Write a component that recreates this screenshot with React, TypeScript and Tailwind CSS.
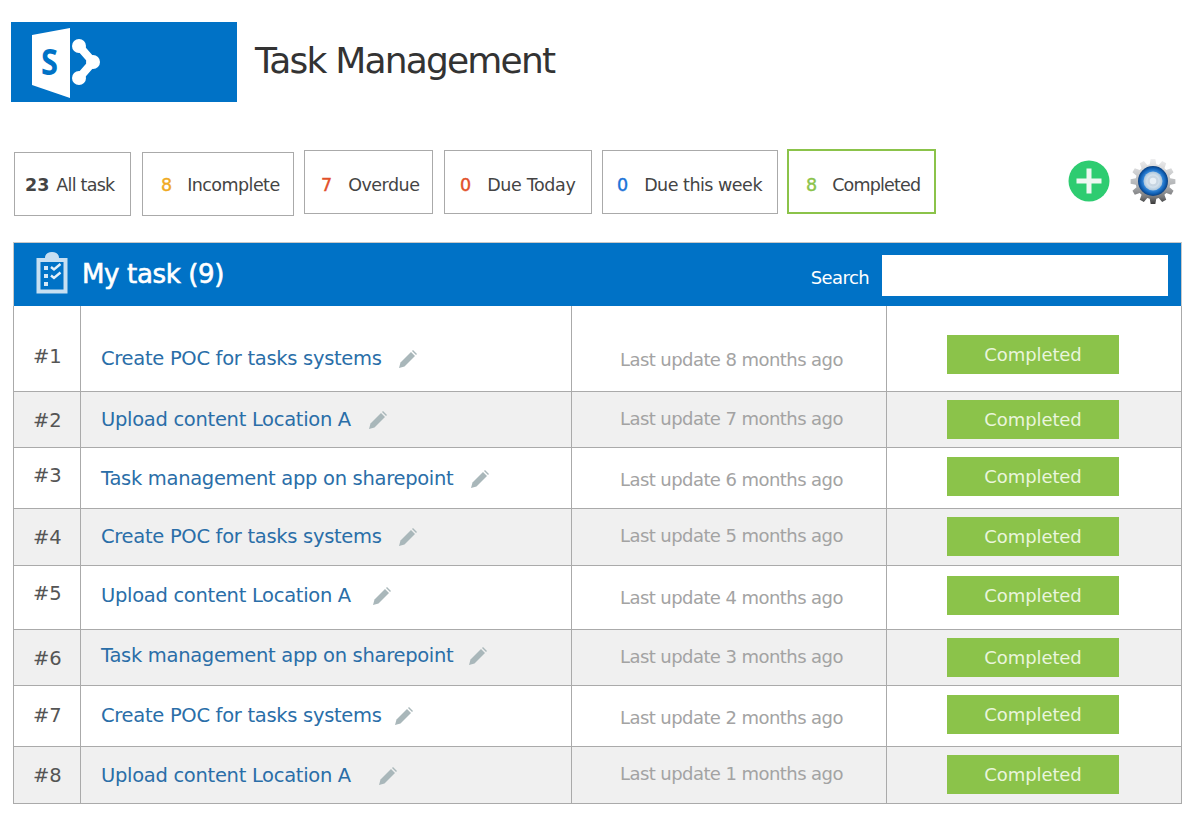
const font = "font-['DejaVu_Sans',sans-serif]";

function Logo() {
  return (
    <svg width="226" height="80" viewBox="0 0 226 80" className="block">
      <rect width="226" height="80" fill="#0072c6" />
      <path d="M21 13 L59 6 V76 L21 63 Z" fill="#fff" />
      <text transform="translate(30 53) scale(0.88 1)" fontFamily="'Noto Sans',sans-serif" fontWeight="700" fontSize="35" fill="#0072c6">S</text>
      <g fill="#fff">
        <circle cx="68" cy="24" r="7" />
        <circle cx="68" cy="56" r="7" />
        <circle cx="82" cy="40" r="7" />
      </g>
      <path d="M68 24 L82 40 L68 56" stroke="#fff" strokeWidth="8" fill="none" />
    </svg>
  );
}

function PlusIcon() {
  return (
    <svg width="42" height="42" viewBox="0 0 42 42" className="block">
      <circle cx="21" cy="21" r="20.5" fill="#2ecc71" />
      <path d="M21 8.5 V33.5 M8.5 21 H33.5" stroke="#eef7f2" strokeWidth="5" />
    </svg>
  );
}

function gearPath(cx: number, cy: number, outer: number, inner: number, n: number) {
  const pts: string[] = [];
  const step = (Math.PI * 2) / n;
  for (let i = 0; i < n; i++) {
    const a = i * step - Math.PI / 2;
    const o = [a - step * 0.36, a - step * 0.2, a + step * 0.2, a + step * 0.36];
    const r = [inner, outer, outer, inner];
    o.forEach((t, k) => pts.push(`${(cx + r[k] * Math.cos(t)).toFixed(2)} ${(cy + r[k] * Math.sin(t)).toFixed(2)}`));
  }
  return `M${pts.join(" L")} Z`;
}

function GearIcon() {
  return (
    <svg width="46" height="48" viewBox="0 0 46 48" className="block">
      <defs>
        <linearGradient id="g1" x1="0" y1="0" x2="0" y2="1">
          <stop offset="0" stopColor="#eeeeef" />
          <stop offset="0.55" stopColor="#b4b6b8" />
          <stop offset="0.85" stopColor="#77787a" />
          <stop offset="1" stopColor="#3a3a3a" />
        </linearGradient>
        <radialGradient id="g2" cx="0.5" cy="0.5" r="0.5">
          <stop offset="0.6" stopColor="#3a8ee0" />
          <stop offset="0.85" stopColor="#1060b4" />
          <stop offset="1" stopColor="#0a3f80" />
        </radialGradient>
        <radialGradient id="g3" cx="0.5" cy="0.5" r="0.5">
          <stop offset="0.45" stopColor="#e8f0f6" />
          <stop offset="1" stopColor="#a9c4da" />
        </radialGradient>
      </defs>
      <path d={gearPath(23, 23.5, 22.5, 17.5, 12)} fill="url(#g1)" />
      <circle cx="23" cy="23" r="15" fill="url(#g2)" />
      <circle cx="23" cy="23" r="9.5" fill="url(#g3)" />
      <circle cx="23" cy="23" r="4.5" fill="none" stroke="#c8d6e2" strokeWidth="2.5" />
    </svg>
  );
}

function ClipboardIcon() {
  return (
    <svg width="32" height="42" viewBox="0 0 32 42" className="block">
      <path d="M0.5 6 H9 C9 2 12 0 16 0 C20 0 23 2 23 6 H31.5 V41.5 H0.5 Z" fill="#c6dff2" />
      <rect x="4.5" y="10" width="23" height="27.5" fill="#0072c6" />
      <g fill="#d5e8f6">
        <rect x="8" y="14" width="4" height="4" />
        <rect x="8" y="22" width="4" height="4" />
        <rect x="8" y="30" width="4" height="4" />
      </g>
      <path d="M15 15 L18 17.5 L24.5 12 M15 23.5 L18 26 L24.5 20.5" stroke="#e4f0f9" strokeWidth="2.4" fill="none" />
    </svg>
  );
}

function Pencil() {
  return (
    <svg width="18" height="18" viewBox="0 0 18 18" className="block">
      <path d="M0 18 L1.5 12.5 L12 2 L16 6 L5.5 16.5 Z" fill="#a9b7ba" />
      <path d="M13 1 L14 0 L18 4 L17 5 Z" fill="#a9b7ba" />
    </svg>
  );
}

const tabs = [
  { n: "23", label: "All task", lab: "tracking-[-0.75px]", box: "w-[117px] h-[64px] ml-[14px] mt-[152px] pl-[10px] pt-[2px] gap-[7px] border border-[#aaa]", num: "text-[#444] font-bold" },
  { n: "8", label: "Incomplete", lab: "tracking-[-0.55px]", box: "w-[152px] h-[64px] ml-[11px] mt-[152px] pl-[18px] pt-[2px] gap-[15px] border border-[#aaa]", num: "text-[#efaa22] [-webkit-text-stroke:0.4px_#efaa22]" },
  { n: "7", label: "Overdue", lab: "tracking-[-0.5px]", box: "w-[129px] h-[64px] ml-[10px] mt-[150px] pl-[16px] pt-[6px] gap-[16px] border border-[#aaa]", num: "text-[#e2502a] [-webkit-text-stroke:0.4px_#e2502a]" },
  { n: "0", label: "Due Today", lab: "tracking-[-0.35px]", box: "w-[148px] h-[64px] ml-[11px] mt-[150px] pl-[15px] pt-[6px] gap-[16px] border border-[#aaa]", num: "text-[#e2502a] [-webkit-text-stroke:0.4px_#e2502a]" },
  { n: "0", label: "Due this week", lab: "tracking-[-0.5px]", box: "w-[176px] h-[64px] ml-[10px] mt-[150px] pl-[14px] pt-[6px] gap-[16px] border border-[#aaa]", num: "text-[#1c73d8] [-webkit-text-stroke:0.4px_#1c73d8]" },
  { n: "8", label: "Completed", lab: "tracking-[-0.8px]", box: "w-[149px] h-[65px] ml-[9px] mt-[149px] pl-[17px] pt-[7px] gap-[15px] border-2 border-[#8bc34a]", num: "text-[#8bc34a] [-webkit-text-stroke:0.4px_#8bc34a]" },
];

const rows = [
  { h: "h-[86px]", bg: "bg-white", id: "#1", t: "Create POC for tasks systems", u: "8", p1: "pt-[39px]", p2: "pt-[41px]", p3: "pt-[42px]", p4: "pt-[29px]", g: "gap-[17px]" },
  { h: "h-[56px]", bg: "bg-[#f0f0f0]", id: "#2", t: "Upload content Location A", u: "7", p1: "pt-[17px]", p2: "pt-[16px]", p3: "pt-[15px]", p4: "pt-[8px]", g: "gap-[18px]" },
  { h: "h-[61px]", bg: "bg-white", id: "#3", t: "Task management app on sharepoint", u: "6", p1: "pt-[16px]", p2: "pt-[19px]", p3: "pt-[20px]", p4: "pt-[9px]", g: "gap-[18px]" },
  { h: "h-[57px]", bg: "bg-[#f0f0f0]", id: "#4", t: "Create POC for tasks systems", u: "5", p1: "pt-[17px]", p2: "pt-[16px]", p3: "pt-[15px]", p4: "pt-[8px]", g: "gap-[17px]" },
  { h: "h-[64px]", bg: "bg-white", id: "#5", t: "Upload content Location A", u: "4", p1: "pt-[16px]", p2: "pt-[18px]", p3: "pt-[20px]", p4: "pt-[10px]", g: "gap-[22px]" },
  { h: "h-[56px]", bg: "bg-[#f0f0f0]", id: "#6", t: "Task management app on sharepoint", u: "3", p1: "pt-[17px]", p2: "pt-[14px]", p3: "pt-[15px]", p4: "pt-[8px]", g: "gap-[16px]" },
  { h: "h-[61px]", bg: "bg-white", id: "#7", t: "Create POC for tasks systems", u: "2", p1: "pt-[18px]", p2: "pt-[18px]", p3: "pt-[20px]", p4: "pt-[9px]", g: "gap-[13px]" },
  { h: "h-[57px]", bg: "bg-[#f0f0f0]", id: "#8", t: "Upload content Location A", u: "1", p1: "pt-[17px]", p2: "pt-[17px]", p3: "pt-[15px]", p4: "pt-[8px]", g: "gap-[28px]" },
];

export default function App() {
  return (
    <div className={`${font} w-[1200px] h-[819px] overflow-hidden bg-white`}>
      <div className="flex items-center pt-[22px] pl-[11px] h-[102px]">
        <Logo />
        <h1 className="ml-[18px] mb-[2px] text-[36px] leading-[46px] text-[#333] tracking-[-1.8px]">Task Management</h1>
      </div>

      <div className="flex items-start h-[140px] -mt-[102px] relative">
        {tabs.map((t) => (
          <div key={t.label} className={`flex items-center shrink-0 text-[17.5px] text-[#444] ${t.box}`}>
            <span className={t.num}>{t.n}</span>
            <span className={t.lab}>{t.label}</span>
          </div>
        ))}
        <div className="ml-[132px] mt-[160px] shrink-0"><PlusIcon /></div>
        <div className="ml-[20px] mt-[158px] shrink-0"><GearIcon /></div>
      </div>

      <div className="ml-[13px] mt-[102px] w-[1169px]">
        <div className="h-[64px] bg-[#0072c6] border border-[#c8c8c8] border-b-0 flex items-center pl-[22px] pr-[13px]">
          <div className="mb-[3px]"><ClipboardIcon /></div>
          <span className="ml-[14px] text-[26px] text-white tracking-[-0.35px] [-webkit-text-stroke:0.6px_white]">My task (9)</span>
          <span className="ml-auto mt-[5px] text-[18px] tracking-[-0.6px] text-white">Search</span>
          <div className="ml-[13px] mt-[2px] w-[286px] h-[41px] bg-white" />
        </div>
        <div className="border-l border-r border-[#aaa]">
          {rows.map((r) => (
            <div key={r.id} className={`grid grid-cols-[66px_491px_315px_1fr] border-b border-[#aaa] ${r.h} ${r.bg}`}>
              <div className={`pl-[19px] text-[19.5px] leading-[24px] text-[#555] ${r.p1}`}>{r.id}</div>
              <div className={`border-l border-[#aaa] pl-[20px] ${r.p2}`}>
                <div className={`flex items-center ${r.g}`}>
                  <span className="text-[19.5px] leading-[24px] tracking-[-0.3px] text-[#2a6ea8]">{r.t}</span>
                  <Pencil />
                </div>
              </div>
              <div className={`border-l border-[#aaa] pl-[48px] text-[18px] leading-[24px] tracking-[-0.57px] text-[#a3a3a3] ${r.p3}`}>Last update {r.u} months ago</div>
              <div className={`border-l border-[#aaa] pl-[60px] ${r.p4}`}>
                <div className="w-[172px] h-[39px] bg-[#8bc34a] flex items-center justify-center text-[18px] tracking-[-0.1px] text-[#e9f5dc]">Completed</div>
              </div>
            </div>
          ))}
        </div>
      </div>
    </div>
  );
}
